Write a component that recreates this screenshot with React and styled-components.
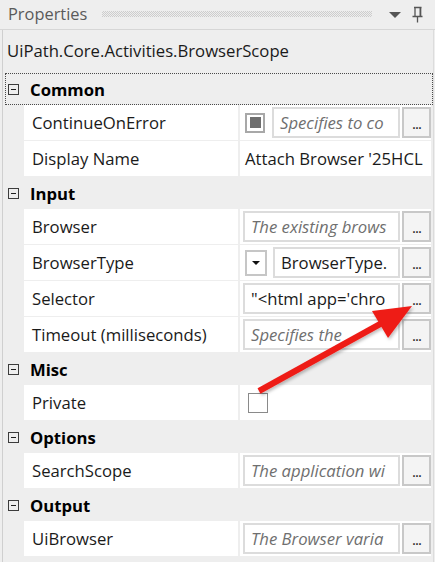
import React from "react";
import styled, { createGlobalStyle } from "styled-components";

const GlobalStyle = createGlobalStyle`
  html, body { margin: 0; padding: 0; background: #eeeeee; }
  body { font-family: "Open Sans", "Noto Sans", sans-serif; }
`;

const Panel = styled.div`
  position: relative;
  width: 435px;
  height: 562px;
  background: #eeeeee;
  overflow: hidden;
  display: flex;
  flex-direction: column;
`;

const TitleBar = styled.div`
  height: 30px;
  flex: none;
  display: flex;
  align-items: center;
  padding-left: 8px;
  padding-right: 12px;
  box-sizing: border-box;
  border-bottom: 1px solid #d6d6d6;
`;

const Title = styled.span`
  font-size: 16.4px;
  color: #5a5a5a;
  line-height: 1;
`;

const Grip = styled.div`
  margin-left: 15px;
  width: 270px;
  height: 6px;
  margin-top: -2px;
  background: repeating-conic-gradient(#cdcdcd 0 25%, transparent 0 50%) 0 0 / 2px 2px;
`;

const TitleIcons = styled.div`
  margin-left: auto;
  display: flex;
  align-items: center;
  gap: 11px;
`;

const Body = styled.div`
  flex: 1;
  margin-left: 2px;
  margin-right: 1px;
  border-left: 1px solid #cfcfcf;
  border-right: 1px solid #dcdcdc;
  display: flex;
  flex-direction: column;
`;

const TypeName = styled.div`
  height: 43px;
  padding-left: 4px;
  font-size: 16.7px;
  color: #1a1a1a;
  display: flex;
  align-items: center;
  padding-bottom: 2px;
  box-sizing: border-box;
`;

const Category = styled.div`
  display: flex;
  flex-direction: column;
`;

const Header = styled.div`
  height: 32px;
  box-sizing: border-box;
  display: flex;
  align-items: center;
  gap: 11px;
  margin-left: 2px;
  padding-left: 2px;
  font-weight: 700;
  font-size: 16.7px;
  color: #000;
  border: 1px dotted ${(p) => (p.$focused ? "#4a4a4a" : "transparent")};
`;

const Toggle = styled.span`
  width: 9px;
  height: 9px;
  border: 1px solid #3c3c3c;
  position: relative;
  flex: none;
  &::after {
    content: "";
    position: absolute;
    left: 2px;
    right: 2px;
    top: 4px;
    height: 1px;
    background: #1e1e1e;
  }
`;

const Rows = styled.div`
  margin-left: 21px;
  margin-right: 2px;
  padding-bottom: 1px;
  display: flex;
  flex-direction: column;
  gap: 1px;
`;

const Row = styled.div`
  display: grid;
  grid-template-columns: 214px 1fr;
  column-gap: 2px;
  height: 35px;
`;

const Name = styled.div`
  background: #ffffff;
  padding-left: 8px;
  display: flex;
  align-items: center;
  font-size: 16.7px;
  color: #1a1a1a;
  white-space: nowrap;
`;

const Value = styled.div`
  background: #ffffff;
  display: flex;
  align-items: center;
  padding: 0 0 0 3px;
  gap: 2px;
  min-width: 0;
`;

const Box = styled.div`
  flex: 1;
  min-width: 0;
  height: 31px;
  box-sizing: border-box;
  border: 2px solid #dcdcdc;
  padding-left: 6px;
  display: flex;
  align-items: center;
  overflow: hidden;
  white-space: nowrap;
  font-size: 16.7px;
  font-style: ${(p) => (p.$hint ? "italic" : "normal")};
  color: ${(p) => (p.$hint ? "#6f6f6f" : "#1a1a1a")};
  margin-left: ${(p) => (p.$inset ? "4px" : "0")};
`;

const PlainValue = styled.div`
  padding-left: 2px;
  font-size: 16.7px;
  color: #1a1a1a;
  white-space: nowrap;
  overflow: hidden;
`;

const DotsButton = styled.div`
  width: 29px;
  height: 31px;
  flex: none;
  box-sizing: border-box;
  border: 2px solid #c8c8c8;
  background: #f4f4f4;
  display: flex;
  align-items: flex-end;
  justify-content: center;
  font-size: 15px;
  color: #222;
  line-height: 1;
  padding-bottom: 5px;
  letter-spacing: -1px;
`;

const Check = styled.div`
  width: 20px;
  height: 20px;
  flex: none;
  box-sizing: border-box;
  margin-left: ${(p) => (p.$indeterminate ? "2px" : "5px")};
  margin-right: 5px;
  border: ${(p) => (p.$indeterminate ? "2px solid #a8a8a8" : "1px solid #8a8a8a")};
  background: #fff;
  display: flex;
  align-items: center;
  justify-content: center;
  &::after {
    content: "";
    display: ${(p) => (p.$indeterminate ? "block" : "none")};
    width: 11px;
    height: 11px;
    background: #6e6e6e;
  }
`;

const Drop = styled.div`
  width: 22px;
  height: 26px;
  flex: none;
  box-sizing: border-box;
  margin-left: 2px;
  border: 2px solid #c6c6c6;
  background: #fff;
  display: flex;
  align-items: center;
  justify-content: center;
  &::after {
    content: "";
    border-left: 4px solid transparent;
    border-right: 4px solid transparent;
    border-top: 4px solid #111;
  }
`;

const Overlay = styled.svg`
  position: absolute;
  left: 0;
  top: 0;
  pointer-events: none;
`;

const Dots = () => <DotsButton>...</DotsButton>;

const categories = [
  {
    name: "Common",
    focused: true,
    rows: [
      { name: "ContinueOnError", check: "ind", box: "Specifies to co", hint: true, dots: true },
      { name: "Display Name", plain: "Attach Browser '25HCL" },
    ],
  },
  {
    name: "Input",
    rows: [
      { name: "Browser", box: "The existing brows", hint: true, dots: true },
      { name: "BrowserType", drop: true, box: "BrowserType.", dots: true },
      { name: "Selector", box: "\"<html app='chro", dots: true },
      { name: "Timeout (milliseconds)", box: "Specifies the", hint: true, dots: true },
    ],
  },
  {
    name: "Misc",
    rows: [{ name: "Private", check: "empty" }],
  },
  {
    name: "Options",
    rows: [{ name: "SearchScope", box: "The application wi", hint: true, dots: true }],
  },
  {
    name: "Output",
    rows: [{ name: "UiBrowser", box: "The Browser varia", hint: true, dots: true }],
  },
];

function PropRow({ r }) {
  return (
    <Row>
      <Name>{r.name}</Name>
      <Value>
        {r.check && <Check $indeterminate={r.check === "ind"} />}
        {r.drop && <Drop />}
        {r.plain && <PlainValue>{r.plain}</PlainValue>}
        {r.box && (
          <Box $hint={r.hint} $inset={r.drop}>
            {r.box}
          </Box>
        )}
        {r.dots && <Dots />}
      </Value>
    </Row>
  );
}

export default function App() {
  return (
    <>
      <GlobalStyle />
      <Panel>
        <TitleBar>
          <Title>Properties</Title>
          <Grip />
          <TitleIcons>
            <svg width="12" height="6" viewBox="0 0 12 6">
              <path d="M0 0 H12 L6 6 Z" fill="#555" />
            </svg>
            <svg width="11" height="17" viewBox="0 0 11 17">
              <path
                d="M2 1.5 H9.5 M3 1.5 V10 M8.5 1.5 V10 M0.5 10.5 H10.5 M5.5 10.5 V16.5"
                stroke="#555"
                strokeWidth="1.3"
                fill="none"
              />
              <rect x="7.6" y="1.5" width="1.6" height="9" fill="#555" />
            </svg>
          </TitleIcons>
        </TitleBar>
        <Body>
          <TypeName>UiPath.Core.Activities.BrowserScope</TypeName>
          {categories.map((c) => (
            <Category key={c.name}>
              <Header $focused={c.focused}>
                <Toggle />
                {c.name}
              </Header>
              <Rows>
                {c.rows.map((r) => (
                  <PropRow key={r.name} r={r} />
                ))}
              </Rows>
            </Category>
          ))}
        </Body>
        <Overlay width="435" height="562" viewBox="0 0 435 562">
          <defs>
            <filter id="sh" x="-10%" y="-10%" width="130%" height="130%">
              <feDropShadow dx="1.5" dy="2" stdDeviation="1.5" floodColor="#000" floodOpacity="0.25" />
            </filter>
          </defs>
          <g filter="url(#sh)">
            <line x1="259" y1="391" x2="382" y2="323" stroke="#ee1c18" strokeWidth="6" />
            <polygon points="412,306 388,338 372,311" fill="#ee1c18" />
          </g>
        </Overlay>
      </Panel>
    </>
  );
}
